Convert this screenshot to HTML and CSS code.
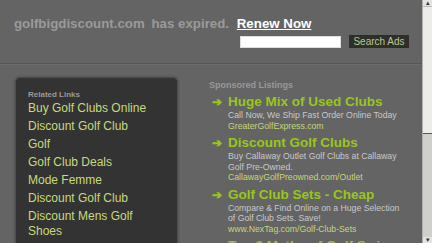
FILE: index.html
```html
<!DOCTYPE html>
<html>
<head>
  <meta charset="UTF-8">
  <title>golfbigdiscount.com</title>
  <link rel="stylesheet" href="styles.css">
</head>
<body>
  <div class="page">
    <div class="main">
      <div class="top-bar">
        <div class="expired">
          <span class="domain">golfbigdiscount.com</span>
          <span class="domain">has expired.</span>
          <a href="#" class="renew">Renew Now</a>
        </div>
        <form class="search-form">
          <input type="text" class="search-box">
          <button type="button" class="search-btn">Search Ads</button>
        </form>
      </div>

      <div class="content">
        <div class="related">
          <div class="related-title">Related Links</div>
          <a href="#" class="related-link">Buy Golf Clubs Online</a>
          <a href="#" class="related-link">Discount Golf Club</a>
          <a href="#" class="related-link">Golf</a>
          <a href="#" class="related-link">Golf Club Deals</a>
          <a href="#" class="related-link">Mode Femme</a>
          <a href="#" class="related-link">Discount Golf Club</a>
          <a href="#" class="related-link">Discount Mens Golf Shoes</a>
        </div>

        <div class="listings">
          <div class="listings-title">Sponsored Listings</div>

          <div class="ad">
            <a href="#" class="ad-title"><span class="arrow">&#10132;</span>Huge Mix of Used Clubs</a>
            <div class="ad-desc">Call Now, We Ship Fast Order Online Today</div>
            <div class="ad-url">GreaterGolfExpress.com</div>
          </div>

          <div class="ad">
            <a href="#" class="ad-title"><span class="arrow">&#10132;</span>Discount Golf Clubs</a>
            <div class="ad-desc">Buy Callaway Outlet Golf Clubs at Callaway Golf Pre-Owned.</div>
            <div class="ad-url">CallawayGolfPreowned.com/Outlet</div>
          </div>

          <div class="ad">
            <a href="#" class="ad-title"><span class="arrow">&#10132;</span>Golf Club Sets - Cheap</a>
            <div class="ad-desc">Compare &amp; Find Online on a Huge Selection of Golf Club Sets. Save!</div>
            <div class="ad-url">www.NexTag.com/Golf-Club-Sets</div>
          </div>

          <div class="ad">
            <a href="#" class="ad-title"><span class="arrow">&#10132;</span>Top 3 Myths of Golf Swing</a>
          </div>
        </div>
      </div>
    </div>

    <div class="scrollbar">
      <div class="sb-arrow">&#9652;</div>
      <div class="sb-thumb"></div>
      <div class="sb-track"></div>
      <div class="sb-arrow">&#9662;</div>
    </div>
  </div>
</body>
</html>
```

FILE: styles.css
```css
body {
  margin: 0;
  padding: 0;
  background: #646464;
  font-family: 'Liberation Sans', Arial, sans-serif;
  overflow: hidden;
}
a {
  text-decoration: none;
}
.page {
  display: flex;
  height: 243px;
  overflow: hidden;
}
.main {
  flex: 1;
  min-width: 0;
}
.top-bar {
  height: 64px;
  box-sizing: border-box;
  padding: 16px 0 0 14px;
  border-bottom: 1px solid #565656;
  box-shadow: 0 1px 0 #6c6c6c;
}
.expired {
  font-size: 13.3px;
  font-weight: bold;
  line-height: 16px;
  white-space: nowrap;
}
.domain {
  color: #9a9a9a;
  margin-right: 3px;
}
.renew {
  color: #fff;
  text-decoration: underline;
  margin-left: 1px;
}
.search-form {
  display: flex;
  align-items: center;
  margin: 3px 0 0 226px;
}
.search-box {
  width: 101px;
  height: 12px;
  box-sizing: border-box;
  border: 1px solid #ddd;
  background: #fff;
  padding: 0;
  margin: 0;
}
.search-btn {
  margin-left: 8px;
  width: 60px;
  height: 13px;
  padding: 0;
  border: none;
  background: #2e2f2a;
  color: #b9c98a;
  font-family: 'Liberation Sans', Arial, sans-serif;
  font-size: 10px;
  line-height: 13px;
}
.content {
  display: flex;
  align-items: flex-start;
  padding-top: 13px;
}
.related {
  margin-left: 15px;
  width: 163px;
  box-sizing: border-box;
  height: 200px;
  padding: 12px 12px 0 12px;
  background: #333;
  border: 1px solid #4c4c4c;
  border-radius: 5px;
  box-shadow: 0 0 2px 1px #575757;
  display: flex;
  flex-direction: column;
}
.related-title {
  color: #999;
  font-size: 8px;
  font-weight: bold;
  line-height: 10px;
  margin-bottom: 1px;
}
.related-link {
  color: #c9da7a;
  font-size: 12px;
  line-height: 15px;
  margin-bottom: 3px;
}
.listings {
  margin-left: 31px;
  padding-top: 3px;
  width: 196px;
}
.listings-title {
  color: #999;
  font-size: 9px;
  font-weight: bold;
  line-height: 11px;
  margin-bottom: 3px;
}
.ad {
  margin-bottom: 4px;
}
.ad-title {
  display: flex;
  color: #99c61c;
  font-size: 13.5px;
  font-weight: bold;
  line-height: 16px;
  white-space: nowrap;
}
.arrow {
  width: 19px;
  padding-left: 3px;
  box-sizing: border-box;
  font-size: 12px;
}
.ad-desc {
  color: #c8c8c8;
  font-size: 8.7px;
  line-height: 10.5px;
  margin-left: 19px;
  width: 177px;
}
.ad-url {
  color: #c4d676;
  font-size: 8.7px;
  line-height: 10.5px;
  margin-left: 19px;
}
.scrollbar {
  width: 9px;
  display: flex;
  flex-direction: column;
  background: #d4d4d0;
  border-left: 1px solid #b0b0b0;
}
.sb-arrow {
  height: 6px;
  font-size: 7px;
  line-height: 6px;
  text-align: center;
  color: #333;
  background: #e4e4e2;
}
.sb-thumb {
  height: 126px;
  background: #ecece9;
  border-bottom: 1px solid #555;
  border-top: 1px solid #bbb;
}
.sb-track {
  flex: 1;
  background: #cfcfcb;
}
```
